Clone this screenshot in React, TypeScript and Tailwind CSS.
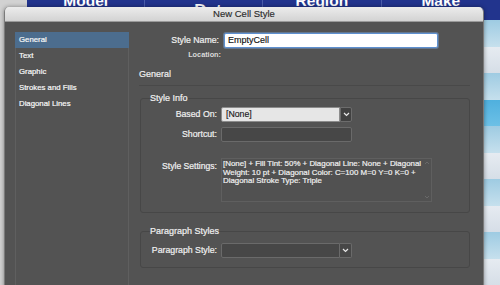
import React from "react";

const Chevron = () => (
  <svg width="7" height="5" viewBox="0 0 7 5">
    <path d="M1 1 L3.5 3.5 L6 1" stroke="#e8e8e8" strokeWidth="1.2" fill="none" />
  </svg>
);

const Caret = ({ up }: { up?: boolean }) => (
  <svg width="6" height="4" viewBox="0 0 6 4">
    <path d={up ? "M1 3 L3 1 L5 3" : "M1 1 L3 3 L5 1"} stroke="#6c6c6c" strokeWidth="0.9" fill="none" />
  </svg>
);

const rowColors = [
  "bg-gradient-to-b from-[#9ecbe2] to-[#c6e0ed]",
  "bg-gradient-to-b from-[#e6ebf1] to-[#d6dee7]",
  "bg-gradient-to-b from-[#9ecbe2] to-[#c6e0ed]",
  "bg-gradient-to-b from-[#4fb0de] to-[#6cc0e6]",
  "bg-gradient-to-b from-[#9ecbe2] to-[#c6e0ed]",
  "bg-gradient-to-b from-[#e6ebf1] to-[#d6dee7]",
  "bg-gradient-to-b from-[#9ecbe2] to-[#c6e0ed]",
  "bg-gradient-to-b from-[#e6ebf1] to-[#d6dee7]",
  "bg-gradient-to-b from-[#9ecbe2] to-[#c6e0ed]",
  "bg-gradient-to-b from-[#e6ebf1] to-[#d6dee7]",
];

export default function App() {
  const items = ["General", "Text", "Graphic", "Strokes and Fills", "Diagonal Lines"];
  return (
    <div className="relative w-[500px] h-[285px] overflow-hidden bg-[#d2d2d2] font-['Liberation_Sans',Arial,sans-serif]">
      {/* background table window */}
      <div className="absolute inset-0 pl-[27px] flex flex-col">
        <div className="h-[20px] flex bg-[#22348d] text-white font-bold overflow-hidden">
          <div className="w-[120px] border-r border-[#4a5caa] flex justify-center">
            <span className="text-[15.5px] leading-none -mt-[7px]">Model</span>
          </div>
          <div className="w-[119px] border-r border-[#4a5caa] flex justify-center pl-[18px]">
            <span className="text-[17px] leading-none mt-[2px]">Date</span>
          </div>
          <div className="w-[120px] border-r border-[#4a5caa] flex justify-center">
            <span className="text-[15.5px] leading-none -mt-[7px]">Region</span>
          </div>
          <div className="w-[120px] flex justify-center">
            <span className="text-[15.5px] leading-none -mt-[7px]">Make</span>
          </div>
        </div>
        <div className="flex flex-col">
          {rowColors.map((c, i) => (
            <div key={i} className={`h-[26.5px] ${c}`} />
          ))}
        </div>
      </div>

      {/* dialog */}
      <div className="absolute left-[4px] top-[7px] w-[480px] h-[300px] rounded-t-[5px] overflow-hidden border-l border-r border-[#7a7a7a] flex flex-col shadow-[0_0_4px_rgba(0,0,0,0.4)]">
        <div className="h-[15px] shrink-0 bg-gradient-to-b from-[#ececec] to-[#d3d3d3] border-b border-[#9a9a9a] text-center text-[9.5px] leading-[14px] text-[#2c2c2c] [-webkit-text-stroke:0.15px_#2c2c2c]">
          New Cell Style
        </div>
        <div className="flex-1 flex bg-[#535353] text-[#f0f0f0] [-webkit-text-stroke:0.2px_#f0f0f0]">
          {/* left list */}
          <div className="ml-[10px] mt-[10px] w-[114px] border-l border-r border-[#5f5f5f] flex flex-col">
            {items.map((it, i) => (
              <div
                key={it}
                className={`h-[16px] leading-[16px] pl-[3px] text-[7.8px] text-white ${i === 0 ? "bg-[#4c6d8e] -mx-px pl-[4px]" : ""}`}
              >
                {it}
              </div>
            ))}
          </div>

          {/* right content */}
          <div className="ml-[10px] w-[331px] flex flex-col">
            <div className="mt-[11px] flex items-center gap-[5px]">
              <div className="w-[80px] text-right text-[8.75px] leading-[11px]">Style Name:</div>
              <div className="w-[214px] h-[15px] bg-white border border-[#5e90d0] rounded-[2px] shadow-[0_0_0_1px_rgba(120,165,220,0.45)] text-[9px] leading-[13px] text-[#111] [-webkit-text-stroke:0.15px_#111] pl-[3px]">
                EmptyCell
              </div>
            </div>
            <div className="mt-[2px] flex">
              <div className="w-[82px] text-right text-[7.3px] leading-[10px] font-bold text-[#dadada] [-webkit-text-stroke:0px]">Location:</div>
            </div>
            <div className="mt-[8px] text-[9px] leading-[12px]">General</div>
            <div className="mt-[5px] border-t border-[#494949]" />

            <fieldset className="mt-[6px] ml-[1px] w-[330px] border border-[#474747] rounded-[3px] pb-[10px]">
              <legend className="ml-[9px] text-[9px] leading-[12px]">Style Info</legend>
              <div className="mt-[3px] flex items-center gap-[4px]">
                <div className="w-[76px] text-right text-[8.75px] leading-[11px]">Based On:</div>
                <div className="w-[131px] h-[15px] flex">
                  <div className="flex-1 bg-[#e6e6e6] border border-[#8c8c8c] rounded-l-[2px] text-[8.75px] leading-[13px] text-[#1a1a1a] [-webkit-text-stroke:0.15px_#1a1a1a] pl-[4px]">
                    [None]
                  </div>
                  <div className="w-[12px] bg-[#414141] border border-[#6c6c6c] rounded-r-[2px] flex items-center justify-center">
                    <Chevron />
                  </div>
                </div>
              </div>
              <div className="mt-[5px] flex items-center gap-[4px]">
                <div className="w-[76px] text-right text-[8.75px] leading-[11px]">Shortcut:</div>
                <div className="w-[131px] h-[15px] bg-[#474747] border border-[#6a6a6a] rounded-[2px]" />
              </div>
              <div className="mt-[16px] flex items-start gap-[4px]">
                <div className="mt-[3px] w-[76px] text-right text-[8.6px] leading-[11px]">Style Settings:</div>
                <div className="w-[211px] h-[44px] border border-[#5f5f5f] bg-[#515151] flex">
                  <div className="flex-1 pt-[1px] pl-[1px] text-[7.9px] leading-[8.6px] whitespace-nowrap">
                    <div>[None] + Fill Tint: 50% + Diagonal Line: None + Diagonal</div>
                    <div>Weight: 10 pt + Diagonal Color: C=100 M=0 Y=0 K=0 +</div>
                    <div>Diagonal Stroke Type: Triple</div>
                  </div>
                  <div className="w-[8px] flex flex-col justify-between items-center py-[2px]">
                    <Caret up />
                    <Caret />
                  </div>
                </div>
              </div>
            </fieldset>

            <fieldset className="mt-[12px] ml-[1px] w-[330px] border border-[#474747] rounded-[3px] pb-[9px]">
              <legend className="ml-[9px] text-[9px] leading-[12px]">Paragraph Styles</legend>
              <div className="mt-[6px] flex items-center gap-[4px]">
                <div className="w-[76px] text-right text-[8.75px] leading-[11px]">Paragraph Style:</div>
                <div className="w-[131px] h-[15px] flex">
                  <div className="flex-1 bg-[#474747] border border-[#6a6a6a] rounded-l-[2px]" />
                  <div className="w-[12px] bg-[#474747] border border-l-0 border-[#6a6a6a] rounded-r-[2px] flex items-center justify-center">
                    <Chevron />
                  </div>
                </div>
              </div>
            </fieldset>
          </div>
        </div>
      </div>
    </div>
  );
}
